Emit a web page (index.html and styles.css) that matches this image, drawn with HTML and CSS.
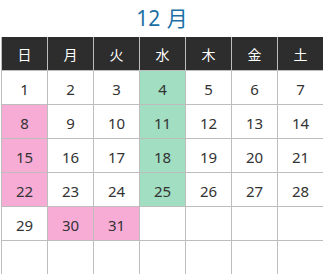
FILE: index.html
```html
<!DOCTYPE html>
<html lang="ja">
<head>
<meta charset="utf-8">
<link rel="stylesheet" href="styles.css">
</head>
<body>
<div class="cal">
  <h2 class="title">12 月</h2>
  <table class="grid">
    <thead>
      <tr><th>日</th><th>月</th><th>火</th><th>水</th><th>木</th><th>金</th><th>土</th></tr>
    </thead>
    <tbody>
      <tr><td>1</td><td>2</td><td>3</td><td class="green">4</td><td>5</td><td>6</td><td>7</td></tr>
      <tr><td class="pink">8</td><td>9</td><td>10</td><td class="green">11</td><td>12</td><td>13</td><td>14</td></tr>
      <tr><td class="pink">15</td><td>16</td><td>17</td><td class="green">18</td><td>19</td><td>20</td><td>21</td></tr>
      <tr><td class="pink">22</td><td>23</td><td>24</td><td class="green">25</td><td>26</td><td>27</td><td>28</td></tr>
      <tr><td>29</td><td class="pink">30</td><td class="pink">31</td><td></td><td></td><td></td><td></td></tr>
      <tr><td></td><td></td><td></td><td></td><td></td><td></td><td></td></tr>
    </tbody>
  </table>
</div>
</body>
</html>
```
FILE: styles.css
```css
html, body {
  margin: 0;
  padding: 0;
  background: #fff;
}
.cal {
  font-family: "Noto Sans", "Noto Sans CJK JP", sans-serif;
  padding-left: 1px;
}
.title {
  margin: 0;
  height: 37px;
  line-height: 36px;
  text-align: center;
  font-size: 21px;
  font-weight: normal;
  color: #1a6fa6;
  word-spacing: 1px;
}
.grid {
  border-collapse: collapse;
  table-layout: fixed;
  width: 323px;
}
.grid th, .grid td {
  width: 45px;
  border: 1px solid #bdbdbd;
  text-align: center;
  padding: 0;
  font-size: 15px;
  font-weight: normal;
}
.grid th {
  height: 33px;
  background: #2d2d2d;
  color: #fff;
  font-size: 14px;
  border-top: none;
  border-bottom: none;
}
.grid td {
  height: 33px;
  padding-top: 2px;
  box-sizing: border-box;
  height: 34px;
  color: #333;
}
.grid td.pink {
  background: #f7acd6;
}
.grid td.green {
  background: #a1dec2;
}
```
